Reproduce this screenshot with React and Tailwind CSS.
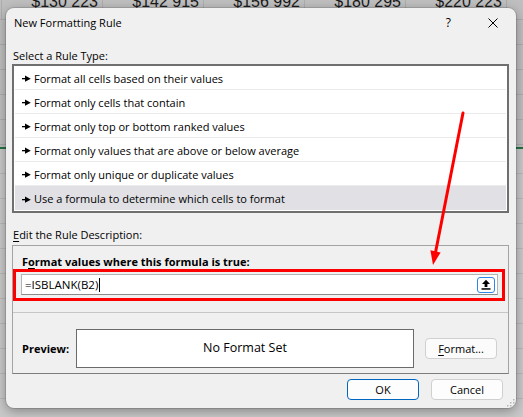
import React from 'react'

const rules = [
  'Format all cells based on their values',
  'Format only cells that contain',
  'Format only top or bottom ranked values',
  'Format only values that are above or below average',
  'Format only unique or duplicate values',
  'Use a formula to determine which cells to format',
]

const amounts = ['$130 223', '$142 915', '$156 992', '$180 295', '$220 223']

function Bullet() {
  return (
    <svg width="9" height="7" viewBox="0 0 9 7" className="shrink-0">
      <rect x="0" y="3" width="4" height="1.3" fill="#000" />
      <path d="M3 0.6 L8.8 3.65 L3 6.7 Z" fill="#000" />
    </svg>
  )
}

function Sheet() {
  return (
    <div className="absolute inset-0 bg-[#c9c9c9] overflow-hidden">
      <div className="h-[147px] bg-[#bfbfbf] flex flex-col">
        <div className="h-[20px] border-b border-[#adadad] flex">
          <div className="w-[2px] border-r border-[#adadad]" />
          {amounts.map((a) => (
            <div
              key={a}
              className="w-[101px] shrink-0 border-r border-[#adadad] h-[20px] -mt-[8px] leading-[20px] text-right pr-[4px] text-[16px] text-[#1a1a1a] font-['Liberation_Sans',Arial,sans-serif]"
            >
              {a}
            </div>
          ))}
        </div>
        {[0, 1, 2, 3, 4].map((i) => (
          <div key={i} className="h-[25px] shrink-0 border-b border-[#adadad]" />
        ))}
      </div>
      <div className="h-[2px] bg-[#217346]" />
      <div className="flex flex-col">
        {[0, 1, 2, 3, 4, 5, 6, 7, 8, 9].map((i) => (
          <div key={i} className="h-[25px] border-b border-[#b9b9b9]" />
        ))}
      </div>
    </div>
  )
}

function RedArrow() {
  return (
    <svg className="absolute inset-0 pointer-events-none" width="523" height="417" viewBox="0 0 523 417">
      <line x1="463" y1="113" x2="435.6" y2="252" stroke="#ff0000" strokeWidth="3" strokeLinecap="round" />
      <polygon points="440.6,252.4 430.4,250.2 433,265" fill="#ff0000" />
    </svg>
  )
}

export default function App() {
  return (
    <div className="relative w-[523px] h-[417px] overflow-hidden font-['Open_Sans',sans-serif] text-[11px] text-black">
      <Sheet />

      <div className="relative mt-[8px] ml-[6px] w-[510px] h-[400px] rounded-[8px] bg-[#f0f0f0] shadow-[0_0_0_1px_rgba(0,0,0,0.12),0_3px_12px_rgba(0,0,0,0.35)] flex flex-col">
        {/* title bar */}
        <div className="h-[28px] flex items-center pl-[8px] pt-[1px]">
          <span className="text-[11px] leading-[16px]">New Formatting Rule</span>
          <span className="ml-auto text-[12px] leading-[16px]">?</span>
          <svg width="10" height="10" viewBox="0 0 10 10" className="ml-[37px] mr-[18px]">
            <path d="M0.5 0.5 L9.5 9.5 M9.5 0.5 L0.5 9.5" stroke="#000" strokeWidth="1" />
          </svg>
        </div>

        <div className="mt-[12px] pl-[7px] h-[16px] leading-[16px]">Select a Rule Type:</div>

        {/* rule type list */}
        <div className="ml-[6px] w-[497px] h-[149px] border-2 border-[#6f6f6f] bg-white px-[1px] pb-[1px]">
          {rules.map((r, i) => (
            <div
              key={r}
              className={
                'h-[24px] flex items-center gap-[3px] pl-[7px] pt-[2px] ' +
                (i === 5 ? 'bg-[#e0e0e5]' : 'border-b border-[#ebebeb]')
              }
            >
              <Bullet />
              <span className="leading-[16px]">{r}</span>
            </div>
          ))}
        </div>

        <div className="mt-[14px] pl-[7px] h-[16px] leading-[16px]">
          <span className="underline underline-offset-2">E</span>dit the Rule Description:
        </div>

        {/* description group */}
        <div className="mt-[2px] ml-[6px] w-[497px] h-[129px] border border-[#a3a3a3] border-b-[#7d7d7d] flex flex-col">
          <div className="pt-[9px] pl-[9px] h-[23px] leading-[14px] font-bold">
            F<span className="underline underline-offset-2">o</span>rmat values where this formula is true:
          </div>

          <div className="w-[492px] h-[32px] border-[3px] border-[#ff0000] pl-[5px] pr-[4px] pt-[2px]">
            <div className="h-[21px] bg-white border border-[#b4b4b4] border-b-[#8a8a8a] flex items-center pl-[3px] pr-[2px]">
              <span className="text-[11.5px] leading-[16px]">=ISBLANK(B2)</span>
              <span className="ml-[1px] w-[1px] h-[14px] bg-black" />
              <div className="ml-auto w-[18px] h-[16px] rounded-[3px] border border-[#2f86e4] bg-[#fdfdfd] flex items-center justify-center">
                <svg width="10" height="11" viewBox="0 0 10 11">
                  <path d="M5 0.8 L9 5 H6.4 V8 H3.6 V5 H1 Z" fill="#000" />
                  <rect x="0.5" y="9.2" width="9" height="1.5" fill="#000" />
                </svg>
              </div>
            </div>
          </div>

          <div className="mt-[11px] h-[1px] bg-[#c6c6c6]" />

          <div className="mt-[16px] flex items-center pl-[9px]">
            <span className="w-[54px] font-bold leading-[14px]">Preview:</span>
            <div className="w-[338px] h-[39px] bg-white border border-[#6b6b6b] flex items-center justify-center text-[12.5px]">
              No Format Set
            </div>
            <button className="ml-[11px] w-[72px] h-[21px] rounded-[4px] border border-[#d0d0d0] bg-[#fbfbfb] leading-[16px]">
              <span className="underline underline-offset-2">F</span>ormat...
            </button>
          </div>
        </div>

        {/* footer buttons */}
        <div className="mt-[5px] flex justify-end gap-[12px] pr-[13px]">
          <button className="w-[72px] h-[21px] rounded-[4px] border border-[#0067c0] bg-[#fdfdfd] leading-[16px]">OK</button>
          <button className="w-[72px] h-[21px] rounded-[4px] border border-[#d0d0d0] bg-[#fdfdfd] leading-[16px]">Cancel</button>
        </div>

        {/* resize grip */}
        <svg width="8" height="8" viewBox="0 0 8 8" className="absolute right-[1px] bottom-[1px]">
          <rect x="6" y="0" width="1.5" height="1.5" fill="#b5b5b5" />
          <rect x="3" y="3" width="1.5" height="1.5" fill="#b5b5b5" />
          <rect x="6" y="3" width="1.5" height="1.5" fill="#b5b5b5" />
          <rect x="0" y="6" width="1.5" height="1.5" fill="#b5b5b5" />
          <rect x="3" y="6" width="1.5" height="1.5" fill="#b5b5b5" />
          <rect x="6" y="6" width="1.5" height="1.5" fill="#b5b5b5" />
        </svg>
      </div>

      <RedArrow />
    </div>
  )
}
